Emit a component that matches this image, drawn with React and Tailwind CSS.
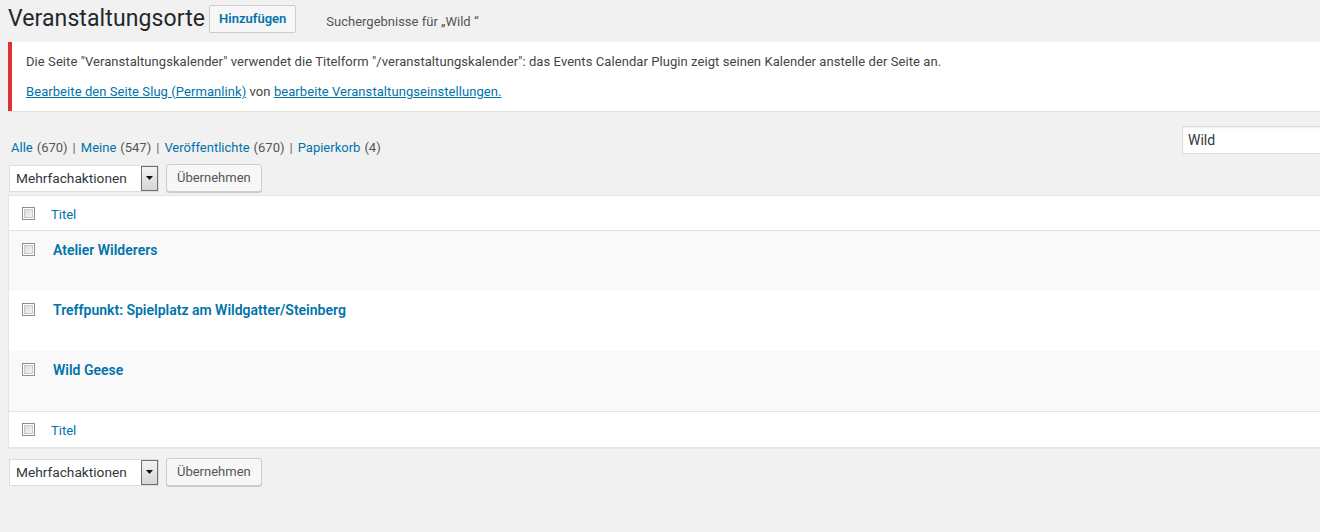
import { useState } from 'react';

const font = { fontFamily: 'Roboto, "Open Sans", Arial, sans-serif' };

function Checkbox() {
  return (
    <span className="inline-block w-[13px] h-[13px] border border-[#8f8f8f] bg-white p-[1px] box-border">
      <span className="block w-full h-full bg-gradient-to-br from-[#dcdcdc] to-[#f4f4f4] border border-[#c8c8c8]" />
    </span>
  );
}

function BulkActions() {
  return (
    <div className="flex items-center gap-[7px] h-[28px]">
      <div className="flex items-stretch w-[150px] h-[27px] bg-white border border-[#ddd]">
        <span className="flex-1 pl-[6px] text-[13.7px] leading-[25px] text-[#32373c]">Mehrfachaktionen</span>
        <span className="w-[17px] flex items-center justify-center border border-[#6f6f6f] bg-gradient-to-b from-[#f2f2f2] to-[#d6d6d6]">
          <svg width="7" height="4" viewBox="0 0 7 4">
            <path d="M0 0h7L3.5 4z" fill="#111" />
          </svg>
        </span>
      </div>
      <button className="h-[28px] px-[10px] text-[13px] text-[#555] bg-[#f7f7f7] border border-[#ccc] rounded-[3px] shadow-[0_1px_0_#ccc]">
        Übernehmen
      </button>
    </div>
  );
}

const rows = [
  'Atelier Wilderers',
  'Treffpunkt: Spielplatz am Wildgatter/Steinberg',
  'Wild Geese',
];

const views = [
  ['Alle', 670],
  ['Meine', 547],
  ['Veröffentlichte', 670],
  ['Papierkorb', 4],
];

export default function App() {
  const [query] = useState('Wild');

  return (
    <div className="w-[1320px] h-[532px] overflow-hidden bg-[#f1f1f1] text-[#444]" style={font}>
      <div className="w-[1340px] pl-[8px]">
        {/* page title */}
        <div className="flex items-center pt-[4px] h-[33px]">
          <h1 className="text-[23px] leading-[29px] text-[#23282d] font-normal tracking-[0.1px]">Veranstaltungsorte</h1>
          <button className="ml-[4px] h-[28px] px-[9px] text-[13px] font-semibold text-[#0073aa] bg-[#f7f7f7] border border-[#ccc] rounded-[2px] mt-[1px]">
            Hinzufügen
          </button>
          <span className="ml-[30px] mt-[6px] text-[13px] text-[#555]">Suchergebnisse für „{query} “</span>
        </div>

        {/* notice */}
        <div className="mt-[9px] bg-white border-l-4 border-[#dc3232] shadow-[0_1px_1px_rgba(0,0,0,0.06)] px-[12px] py-[1px] text-[13px] text-[#444] tracking-[0.07px]">
          <p className="mt-[7px] mb-[6.5px] p-[2px] leading-[19.5px]">
            Die Seite "Veranstaltungskalender" verwendet die Titelform "/veranstaltungskalender": das Events Calendar Plugin zeigt seinen Kalender anstelle der Seite an.
          </p>
          <p className="my-[6.5px] p-[2px] leading-[19.5px]">
            <a className="text-[#0073aa] underline">Bearbeite den Seite Slug (Permanlink)</a> von{' '}
            <a className="text-[#0073aa] underline">bearbeite Veranstaltungseinstellungen.</a>
          </p>
        </div>

        {/* views + search */}
        <div className="flex items-end justify-between mt-[15px] h-[28px]">
          <div className="flex items-center text-[13px] text-[#555] pl-[3px] mb-[-3px]">
            {views.map(([label, count], i) => (
              <span key={label} className="flex items-center">
                {i > 0 && <span className="mx-[5px] text-[#666]">|</span>}
                <a className="text-[#0073aa]">{label}</a>
                <span className="ml-[4px] text-[#555]">({count})</span>
              </span>
            ))}
          </div>
          <div className="w-[158px] h-[28px] bg-white border border-[#ddd] shadow-[inset_0_1px_2px_rgba(0,0,0,0.07)] text-[14px] leading-[27px] pl-[5px] text-[#32373c]">
            {query}
          </div>
        </div>

        <div className="mt-[10px] pl-[1px]">
          <BulkActions />
        </div>

        {/* list table */}
        <div className="mt-[3px] bg-white border border-[#e5e5e5] shadow-[0_1px_1px_rgba(0,0,0,0.04)]">
          <div className="flex items-center h-[35px] border-b border-[#e1e1e1] pl-[13px]">
            <Checkbox />
            <a className="ml-[16px] text-[13px] text-[#0073aa] mt-[3px]">Titel</a>
          </div>
          {rows.map((title, i) => (
            <div key={title} className={`flex items-start h-[60px] pl-[13px] pt-[12px] ${i % 2 === 0 ? 'bg-[#f9f9f9]' : 'bg-white'}`}>
              <Checkbox />
              <a className="ml-[18px] -mt-[2px] text-[14px] font-semibold text-[#0073aa] leading-[19px]">{title}</a>
            </div>
          ))}
          <div className="flex items-center h-[36px] border-t border-[#e1e1e1] pl-[13px]">
            <Checkbox />
            <a className="ml-[16px] text-[13px] text-[#0073aa] mt-[2px]">Titel</a>
          </div>
        </div>

        <div className="mt-[10px] pl-[1px]">
          <BulkActions />
        </div>
      </div>
    </div>
  );
}
